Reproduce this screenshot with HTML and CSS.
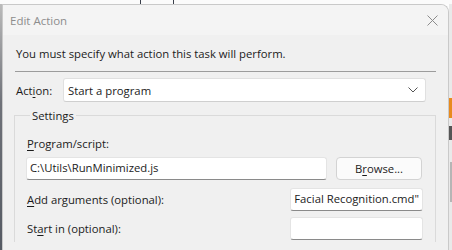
FILE: index.html
```html
<!DOCTYPE html>
<html lang="en">
<head>
  <meta charset="UTF-8" />
  <title>Edit Action</title>
  <link rel="stylesheet" href="styles.css">
</head>
<body>
  <div class="screen">
    <div class="backdrop-top">
      <span class="mark mark-a"></span>
      <span class="mark mark-b"></span>
    </div>
    <div class="row">
      <div class="edge-left"></div>
      <div class="dialog">
        <div class="titlebar">
          <span class="title">Edit Action</span>
          <svg class="close" width="11" height="11" viewBox="0 0 11 11">
            <path d="M0.5 0.5 L10.5 10.5 M10.5 0.5 L0.5 10.5" stroke="#8c8c8c" stroke-width="1" fill="none"/>
          </svg>
        </div>
        <div class="content">
          <p class="intro">You must specify what action this task will perform.</p>
          <div class="separator"></div>
          <div class="action-row">
            <span class="label">Act<u>i</u>on:</span>
            <div class="combo">
              <span>Start a program</span>
              <svg width="10" height="6" viewBox="0 0 10 6">
                <path d="M0.5 0.5 L5 5 L9.5 0.5" stroke="#555" stroke-width="1" fill="none"/>
              </svg>
            </div>
          </div>
          <fieldset class="settings">
            <legend>Settings</legend>
            <div class="label"><u>P</u>rogram/script:</div>
            <div class="program-row">
              <div class="field wide">C:\Utils\RunMinimized.js</div>
              <button class="browse">B<u>r</u>owse...</button>
            </div>
            <div class="opt-row">
              <span class="label"><u>A</u>dd arguments (optional):</span>
              <div class="field small scrolled"><span>Facial Recognition.cmd"</span></div>
            </div>
            <div class="opt-row last">
              <span class="label">St<u>a</u>rt in (optional):</span>
              <div class="field small"></div>
            </div>
          </fieldset>
        </div>
      </div>
      <div class="edge-right">
        <span class="app-orange"></span>
        <span class="app-dark"></span>
        <span class="app-bar"></span>
      </div>
    </div>
  </div>
</body>
</html>
```

FILE: styles.css
```css
body {
  margin: 0;
  padding: 0;
  background-color: #fdfdfd;
  font-family: "Open Sans", "Noto Sans", Arial, sans-serif;
  font-size: 11.3px;
  color: #1b1b1b;
  overflow: hidden;
}
.screen {
  width: 452px;
  height: 250px;
  display: flex;
  flex-direction: column;
  overflow: hidden;
}
.backdrop-top {
  height: 4px;
  flex-shrink: 0;
  position: relative;
  background-color: #fbfbfb;
}
.mark {
  position: absolute;
  top: 0;
  width: 1px;
  height: 4px;
  background-color: #3a3f4a;
}
.mark-a { left: 140px; }
.mark-b { left: 173px; }
.row {
  height: 246px;
  display: flex;
}
.edge-left {
  width: 2px;
  background: linear-gradient(#bbb, #6f7279 40%, #555a63);
}
.dialog {
  width: 445px;
  height: 245px;
  background-color: #f0f0f0;
  border: 1px solid #c9c9c9;
  border-bottom: none;
  border-radius: 0 8px 0 0;
  overflow: hidden;
}
.titlebar {
  height: 30px;
  background-color: #f4f4f4;
  display: flex;
  align-items: center;
  justify-content: space-between;
  padding: 0 10px 0 7px;
}
.title {
  color: #8d8d8d;
  font-size: 11.5px;
}
.close {
  margin-top: 1px;
}
.content {
  padding: 0 12px 0 12px;
}
.intro {
  margin: 0;
  padding: 11px 0 0 1px;
  height: 25px;
  line-height: 16px;
}
.separator {
  height: 1px;
  background-color: #9c9c9c;
}
.action-row {
  display: flex;
  align-items: center;
  margin-top: 6px;
  padding-left: 1px;
}
.action-row .label {
  width: 47px;
}
.combo {
  width: 350px;
  height: 22px;
  background-color: #fff;
  border: 1px solid #e0e0e0;
  border-bottom-color: #cfcfcf;
  border-radius: 3px;
  display: flex;
  align-items: center;
  justify-content: space-between;
  padding: 0 7px 0 4px;
}
.settings {
  margin: 6px 0 0 -1px;
  padding: 13px 0 0 11px;
  border: 1px solid #dadada;
  border-bottom: none;
  height: 120px;
}
.settings legend {
  padding: 0 2px;
  margin-left: 4px;
}
.settings > .label {
  line-height: 16px;
  margin-left: 1px;
}
.program-row {
  display: flex;
  align-items: center;
  margin-top: 5px;
}
.field {
  height: 21px;
  background-color: #fff;
  border: 1px solid #e4e4e4;
  border-bottom-color: #8a8a8a;
  border-radius: 3px;
  padding: 0 3px;
  line-height: 20px;
  white-space: nowrap;
  overflow: hidden;
}
.scrolled {
  display: flex;
  justify-content: flex-end;
}
.scrolled span {
  flex-shrink: 0;
}
.wide {
  width: 293px;
}
.small {
  width: 125px;
  margin-left: auto;
}
.browse {
  margin-left: 9px;
  width: 86px;
  height: 23px;
  background-color: #fbfbfb;
  border: 1px solid #d3d3d3;
  border-radius: 4px;
  font-family: inherit;
  font-size: 11.3px;
  color: #1b1b1b;
  padding: 0;
}
.opt-row {
  display: flex;
  align-items: center;
  margin-top: 8px;
  margin-right: 12px;
}
.opt-row.last {
  margin-top: 6px;
}
.opt-row .label {
  margin-left: 1px;
}
u {
  text-underline-offset: 2px;
}
.edge-right {
  flex: 1;
  position: relative;
  background-color: #e9e9e9;
}
.app-orange {
  position: absolute;
  top: 94px;
  left: 0;
  width: 4px;
  height: 20px;
  background-color: #e88a1e;
}
.app-dark {
  position: absolute;
  top: 122px;
  left: 0;
  width: 4px;
  height: 14px;
  background-color: #555;
}
.app-bar {
  position: absolute;
  top: 158px;
  left: 1px;
  width: 3px;
  height: 40px;
  background-color: #b5b5b5;
}
```
